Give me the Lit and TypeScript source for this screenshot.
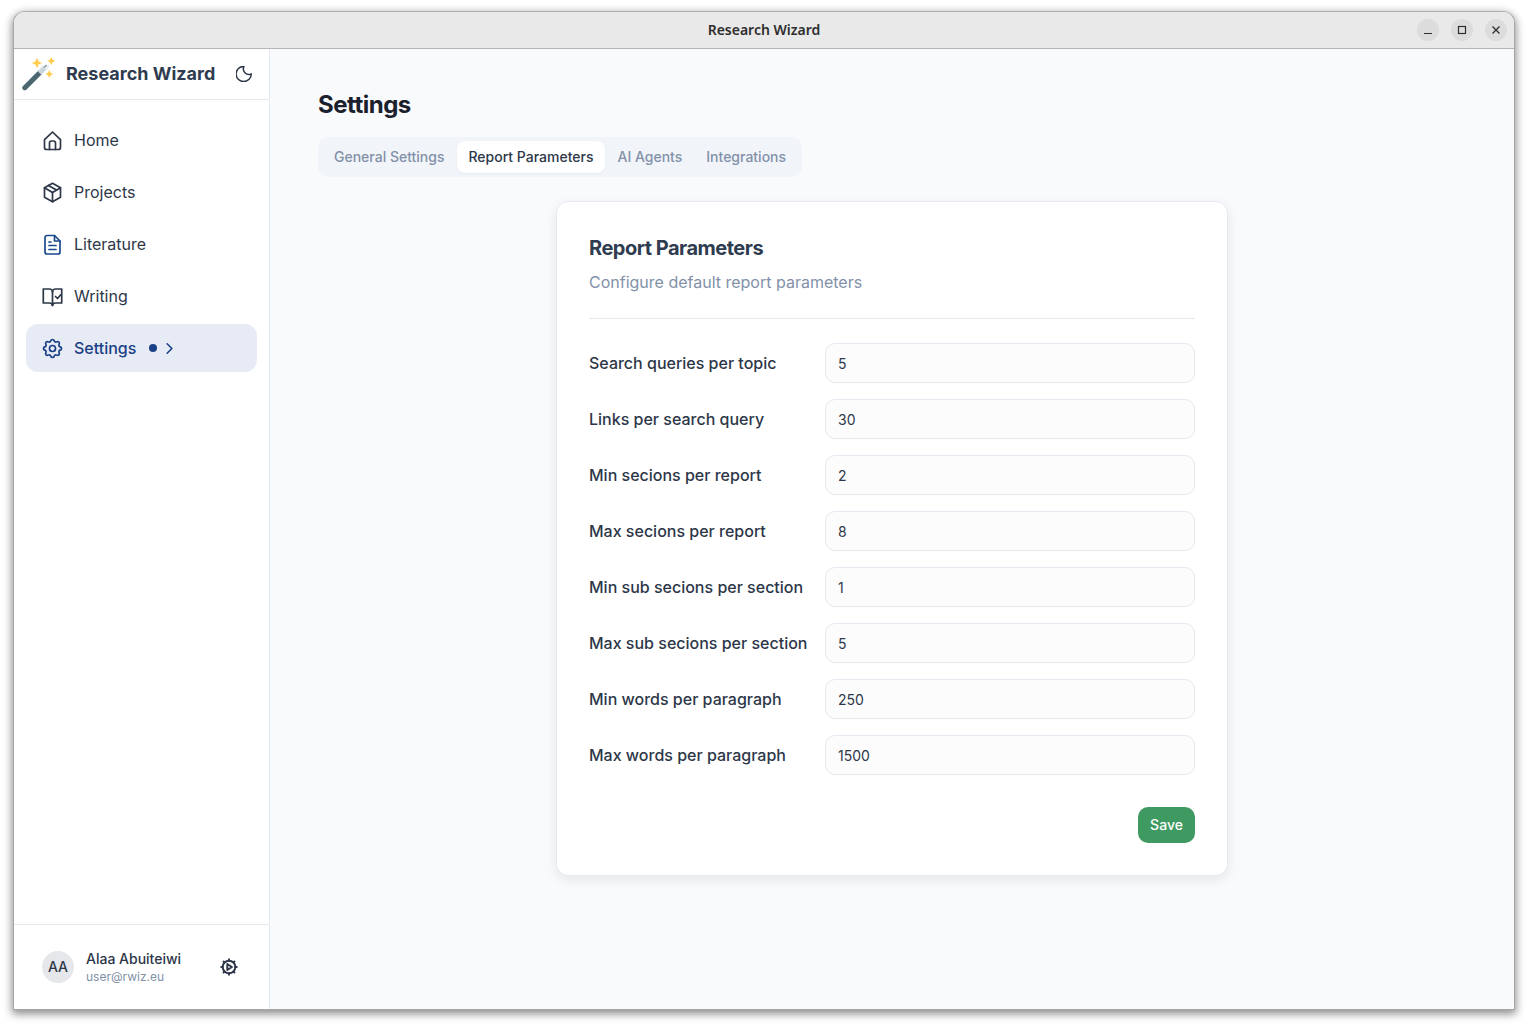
import { LitElement, html, css, svg } from "lit";
import { customElement } from "lit/decorators.js";

const ico = (body: unknown, size = 19, sw = 1.7) => html`<svg class="ico" width=${size} height=${size} viewBox="2.5 2.5 19 19" fill="none" stroke="currentColor" stroke-width=${sw} stroke-linecap="round" stroke-linejoin="round">${body}</svg>`;

const icons = {
  home: svg`<path d="M4 11.2 12 3.500l8 7.700V19a2 2 0 0 1-2 2H6a2 2 0 0 1-2-2z"/><path d="M9 21v-6.500a2 2 0 0 1 2-2h2a2 2 0 0 1 2 2V21"/>`,
  box: svg`<path d="M12 2.800 20 7.200v9.600L12 21.200 4 16.800V7.200z"/><path d="M4 7.200 12 12l8-4.800"/><path d="M12 12v9.200"/><path d="M8 5 16 9.600"/>`,
  doc: svg`<path d="M14 3H6.500a2 2 0 0 0-2 2v14.500a2 2 0 0 0 2 2h11a2 2 0 0 0 2-2V8.500z"/><path d="M14 3v5.500h5.500"/><path d="M8.500 9.500h2"/><path d="M8.500 13h7"/><path d="M8.500 17h7"/>`,
  book: svg`<path d="M12 7.500a3 3 0 0 0-3-3H2.800v14H9a3 3 0 0 1 3 2.500"/><path d="M12 7.500a3 3 0 0 1 3-3h6.200v14H15a3 3 0 0 0-3 2.500z"/><path d="m15 12 2 2 3-3.500"/>`,
  gear: svg`<path d="M10.325 4.317c.426-1.756 2.924-1.756 3.350 0a1.724 1.724 0 0 0 2.573 1.066c1.543-.94 3.310.826 2.370 2.370a1.724 1.724 0 0 0 1.065 2.572c1.756.426 1.756 2.924 0 3.350a1.724 1.724 0 0 0-1.066 2.573c.94 1.543-.826 3.310-2.370 2.370a1.724 1.724 0 0 0-2.572 1.065c-.426 1.756-2.924 1.756-3.350 0a1.724 1.724 0 0 0-2.573-1.066c-1.543.94-3.310-.826-2.370-2.370a1.724 1.724 0 0 0-1.065-2.572c-1.756-.426-1.756-2.924 0-3.350a1.724 1.724 0 0 0 1.066-2.573c-.94-1.543.826-3.310 2.370-2.370 1 .608 2.296.07 2.572-1.065z"/><circle cx="12" cy="12" r="3"/>`,
  moon: svg`<path d="M12 3a6.500 6.500 0 0 0 8.600 8.800A9 9 0 1 1 12 3z"/>`,
  chev: svg`<path d="m9 6 6 6-6 6"/>`,
  auto: svg`<circle cx="12" cy="12" r="7.500"/><path d="M12 2.800v1.700M12 19.500v1.700M2.800 12h1.700M19.500 12h1.700M5.500 5.500l1.200 1.200M17.300 17.300l1.200 1.200M5.500 18.500l1.200-1.200M17.300 6.700l1.200-1.200"/><path d="M10 8.500v7l5.500-3.500z"/>`,
};

const wand = html`<svg class="wand" width="36" height="36" viewBox="0 0 36 36">
  <path d="M2.800 31.700 17.500 17" stroke="#4c666f" stroke-width="5" stroke-linecap="round"/>
  <path d="M17.500 17 23 11.500" stroke="#ccd6dd" stroke-width="5"/>
  <path d="M21.500 11 24 8.500l2.500 2.500-2.500 2.500z" fill="#8899a6"/>
  <path d="M23.500 12.500 26.300 9.700" stroke="#e8edf0" stroke-width="2.200" stroke-linecap="round"/>
  <path d="M15 1.800 16.600 5.400 20.200 7 16.600 8.600 15 12.200 13.400 8.600 9.800 7 13.400 5.400z" fill="#ffcc4d"/>
  <path d="M29.300 1 30.600 3.700 33.300 5 30.600 6.300 29.300 9 28 6.300 25.300 5 28 3.700z" fill="#ffcc4d"/>
  <path d="M27.300 14 28.600 16.700 31.300 18 28.600 19.300 27.300 22 26 19.300 23.300 18 26 16.700z" fill="#ffcc4d"/>
</svg>`;

const fields: [string, string][] = [
  ["Search queries per topic", "5"],
  ["Links per search query", "30"],
  ["Min secions per report", "2"],
  ["Max secions per report", "8"],
  ["Min sub secions per section", "1"],
  ["Max sub secions per section", "5"],
  ["Min words per paragraph", "250"],
  ["Max words per paragraph", "1500"],
];

const nav: [string, unknown][] = [
  ["Home", icons.home],
  ["Projects", icons.box],
  ["Literature", icons.doc],
  ["Writing", icons.book],
];

@customElement("app-root")
export class AppRoot extends LitElement {
  static styles = css`
    :host {
      display: block;
      box-sizing: border-box;
      width: 1528px;
      height: 1026px;
      padding: 11px 13px 16px 13px;
      background: #fff;
      font-family: Inter, "Liberation Sans", sans-serif;
      overflow: hidden;
    }
    * { box-sizing: border-box; }
    .window {
      height: 999px;
      display: flex;
      flex-direction: column;
      border: 1px solid #a6a6a6;
      border-top-color: #b0b0b0;
      border-radius: 12px 12px 0 0;
      overflow: hidden;
      box-shadow: 0 3px 8px 1px rgba(0,0,0,.45);
      background: #f9fafc;
    }
    .titlebar {
      height: 37px;
      flex: none;
      display: flex;
      align-items: center;
      justify-content: center;
      position: relative;
      padding-bottom: 2px;
      background: #e9e9e9;
      border-bottom: 1px solid #b5b5b5;
      font-family: "Noto Sans", Inter, sans-serif;
      font-size: 14px;
      font-weight: 600;
      color: #2e2e2e;
    }
    .controls {
      position: absolute;
      right: 7px;
      top: 7px;
      display: flex;
      gap: 12px;
    }
    .ctl {
      width: 22px;
      height: 22px;
      border-radius: 50%;
      background: #dcdcdc;
      display: flex;
      align-items: center;
      justify-content: center;
      color: #2e2e2e;
    }
    .body { flex: 1; display: flex; min-height: 0; }
    .side {
      width: 256px;
      flex: none;
      display: flex;
      flex-direction: column;
      background: #fff;
      border-right: 1px solid #e5e9f0;
    }
    .brand {
      height: 51px;
      flex: none;
      display: flex;
      align-items: center;
      border-bottom: 1px solid #e5e9f0;
      padding-left: 8px;
    }
    .wand { flex: none; }
    .brand-name {
      margin-left: 8px;
      padding-bottom: 2px;
      font-size: 18px;
      font-weight: 700;
      color: #2f3c50;
      white-space: nowrap;
    }
    .moon { margin-left: 21px; padding-bottom: 1px; color: #2d3748; display: flex; }
    .nav {
      flex: 1;
      padding: 16px 12px;
      display: flex;
      flex-direction: column;
      gap: 4px;
    }
    .item {
      height: 48px;
      display: flex;
      align-items: center;
      gap: 12px;
      padding-left: 16px;
      border-radius: 12px;
      font-size: 16px;
      color: #2d3748;
    }
    .item > .ico { margin-left: .5px; margin-right: .5px; }
    .item .ico { flex: none; color: #2d3748; overflow: visible; }
    .item.doc .ico { color: #1a4a8e; }
    .item.active { background: #e6ebf5; color: #1a4085; font-weight: 500; }
    .item.active .ico { color: #1a4085; }
    .dot { width: 8px; height: 8px; margin-left: 1px; border-radius: 50%; background: #1a4085; }
    .chev { display: flex; margin-left: -7px; }
    .foot {
      height: 85px;
      flex: none;
      border-top: 1px solid #e5e9f0;
      display: flex;
      align-items: center;
      padding-left: 28px;
    }
    .avatar {
      width: 32px;
      height: 32px;
      padding-bottom: 1px;
      border-radius: 50%;
      background: #e5e7eb;
      color: #2d3748;
      font-size: 14px;
      font-weight: 500;
      display: flex;
      align-items: center;
      justify-content: center;
      flex: none;
    }
    .who { margin-left: 12px; width: 135px; padding-top: 2px; }
    .who-name { font-size: 14px; line-height: 18px; color: #2d3748; font-weight: 500; }
    .who-mail { font-size: 12px; line-height: 18px; color: #8291a8; }
    .foot-ico { color: #2d3748; display: flex; }
    .foot-ico .ico { overflow: visible; }
    .main {
      flex: 1;
      min-width: 0;
      padding: 38px 48px 0;
    }
    h1 {
      margin: 0;
      font-size: 24px;
      line-height: 36px;
      font-weight: 700;
      letter-spacing: -0.5px;
      color: #1a202c;
    }
    .tabs {
      margin-top: 14px;
      display: inline-flex;
      padding: 4px;
      height: 40px;
      background: #f1f4f9;
      border-radius: 10px;
      vertical-align: top;
    }
    .tab {
      height: 32px;
      display: flex;
      align-items: center;
      padding: 0 12px 2px;
      font-size: 14px;
      font-weight: 500;
      color: #8291a8;
      border-radius: 8px;
      white-space: nowrap;
    }
    .tab.first { padding-right: 13px; }
    .tab.active {
      padding-left: 11px;
      background: #fff;
      color: #2d3748;
      box-shadow: 0 1px 2px rgba(0,0,0,.05);
    }
    .card {
      width: 672px;
      margin: 24px auto 0;
      padding: 32px;
      background: #fff;
      border: 1px solid #e5e9f0;
      border-radius: 12px;
      box-shadow: 0 4px 12px rgba(0,0,0,.08);
    }
    h2 {
      margin: 0;
      font-size: 20px;
      line-height: 28px;
      font-weight: 700;
      letter-spacing: -0.5px;
      color: #2f3c50;
    }
    .sub {
      margin-top: 8px;
      font-size: 16px;
      line-height: 24px;
      color: #8291a8;
    }
    .rule { height: 1px; background: #e5e9f0; margin: 24px 0; }
    .rows { display: flex; flex-direction: column; gap: 16px; }
    .row { display: flex; align-items: center; height: 40px; }
    .row label {
      width: 236px;
      flex: none;
      font-size: 16px;
      font-weight: 500;
      color: #2d3748;
      white-space: nowrap;
    }
    .input {
      flex: 1;
      height: 40px;
      display: flex;
      align-items: center;
      padding: 0 12px;
      font-size: 14px;
      color: #2d3748;
      background: #fcfcfd;
      border: 1px solid #e5e9f0;
      border-radius: 10px;
    }
    .actions { display: flex; justify-content: flex-end; margin-top: 32px; }
    .save {
      width: 57px;
      height: 36px;
      padding-bottom: 2px;
      display: flex;
      align-items: center;
      justify-content: center;
      background: #3f9a61;
      color: #fff;
      font-size: 14px;
      font-weight: 500;
      border-radius: 10px;
    }
  `;

  render() {
    return html`<div class="window">
      <div class="titlebar">
        Research Wizard
        <div class="controls">
          <div class="ctl"><svg width="12" height="12" viewBox="0 0 12 12"><path d="M2 9.500h8" stroke="currentColor" stroke-width="1.200"/></svg></div>
          <div class="ctl"><svg width="12" height="12" viewBox="0 0 12 12"><rect x="2.500" y="2.500" width="7" height="7" fill="none" stroke="currentColor" stroke-width="1.200"/></svg></div>
          <div class="ctl"><svg width="12" height="12" viewBox="0 0 12 12"><path d="M2.500 2.500l7 7M9.500 2.500l-7 7" stroke="currentColor" stroke-width="1.300"/></svg></div>
        </div>
      </div>
      <div class="body">
        <aside class="side">
          <div class="brand">${wand}<span class="brand-name">Research Wizard</span><span class="moon">${ico(icons.moon, 16, 1.8)}</span></div>
          <div class="nav">
            ${nav.map(([n, i]) => html`<div class="item ${n === "Literature" ? "doc" : ""}">${ico(i)}<span>${n}</span></div>`)}
            <div class="item active">${ico(icons.gear)}<span>Settings</span><span class="dot"></span><span class="chev">${ico(icons.chev, 15, 2)}</span></div>
          </div>
          <div class="foot">
            <div class="avatar">AA</div>
            <div class="who"><div class="who-name">Alaa Abuiteiwi</div><div class="who-mail">user@rwiz.eu</div></div>
            <span class="foot-ico">${ico(icons.auto, 16, 2.3)}</span>
          </div>
        </aside>
        <main class="main">
          <h1>Settings</h1>
          <div class="tabs">
            <div class="tab first">General Settings</div>
            <div class="tab active">Report Parameters</div>
            <div class="tab">AI Agents</div>
            <div class="tab">Integrations</div>
          </div>
          <section class="card">
            <h2>Report Parameters</h2>
            <div class="sub">Configure default report parameters</div>
            <div class="rule"></div>
            <div class="rows">
              ${fields.map(([l, v]) => html`<div class="row"><label>${l}</label><div class="input">${v}</div></div>`)}
            </div>
            <div class="actions"><div class="save">Save</div></div>
          </section>
        </main>
      </div>
    </div>`;
  }
}
